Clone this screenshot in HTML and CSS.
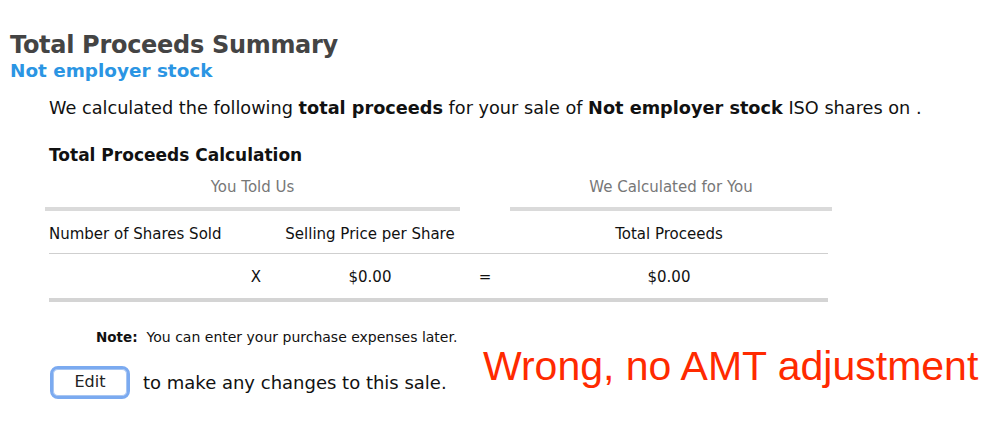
FILE: index.html
```html
<!DOCTYPE html>
<html>
<head>
<meta charset="utf-8">
<link rel="stylesheet" href="styles.css">
</head>
<body>
<div class="page">
  <h1 class="title">Total Proceeds Summary</h1>
  <div class="subtitle">Not employer stock</div>
  <p class="intro">We calculated the following <b>total proceeds</b> for your sale of <b>Not employer stock</b> ISO shares on .</p>
  <h2 class="section">Total Proceeds Calculation</h2>
  <div class="calc">
    <div class="groups">
      <div class="group"><span class="group-label">You Told Us</span></div>
      <div></div>
      <div class="group"><span class="group-label">We Calculated for You</span></div>
    </div>
    <div class="grid head">
      <div class="c1 left">Number of Shares Sold</div>
      <div class="c2">Selling Price per Share</div>
      <div class="c3"></div>
      <div class="c4">Total Proceeds</div>
    </div>
    <div class="grid data">
      <div class="c1 right">X</div>
      <div class="c2">$0.00</div>
      <div class="c3">=</div>
      <div class="c4">$0.00</div>
    </div>
  </div>
  <div class="note"><b>Note:</b><span>You can enter your purchase expenses later.</span></div>
  <div class="edit-row">
    <button class="edit-btn">Edit</button>
    <span>to make any changes to this sale.</span>
  </div>
  <div class="annotation">Wrong, no AMT adjustment</div>
</div>
</body>
</html>
```
FILE: styles.css
```css
html, body { margin: 0; padding: 0; background: #fff; }
body { font-family: "DejaVu Sans", "Lucida Grande", sans-serif; color: #111; }
.page { position: relative; width: 999px; height: 442px; padding: 30px 0 0 10px; box-sizing: border-box; overflow: hidden; }
.title { margin: 0; font-size: 24px; line-height: 30px; font-weight: bold; color: #444; letter-spacing: -0.3px; }
.subtitle { font-size: 18.4px; line-height: 22px; font-weight: bold; color: #2b95e3; margin-top: 0; }
.intro { margin: 14px 0 0 39px; font-size: 17.7px; line-height: 24px; color: #111; white-space: nowrap; }
.section { margin: 24px 0 0 39px; font-size: 17px; line-height: 22px; font-weight: bold; color: #111; }
.calc { margin: 3px 0 0 35px; width: 787px; }
.groups { display: grid; grid-template-columns: 415px 50px 322px; }
.group { border-bottom: 4px solid #dadada; text-align: center; padding: 8px 0 10px; }
.group-label { font-size: 15px; line-height: 20px; color: #777; }
.grid { display: grid; grid-template-columns: 231px 180px 50px 318px; margin-left: 4px; width: 779px; font-size: 15px; }
.grid > div { text-align: center; }
.grid .left { text-align: left; }
.grid .right { text-align: right; padding-right: 19px; }
.head { border-bottom: 1px solid #cfcfcf; padding: 13px 0 8px; line-height: 21px; }
.data { border-bottom: 4px solid #d4d4d4; padding: 13px 0 10px; line-height: 21px; }
.note { margin: 26px 0 0 86px; font-size: 14px; line-height: 18px; color: #111; }
.note b { font-size: 13.5px; }
.note span { margin-left: 9px; }
.edit-row { margin: 20px 0 0 40px; display: flex; align-items: center; gap: 13px; font-size: 18px; }
.edit-btn { width: 80px; height: 33px; box-sizing: border-box; border: 3px solid #7baaf0; border-radius: 8px; background: #fff; font-family: inherit; font-size: 16px; color: #222; padding: 0 0 2px; box-shadow: inset 0 0 0 1px #a8c6f2; }
.annotation { position: absolute; left: 483px; top: 346px; font-family: "Liberation Sans", Arial, sans-serif; font-size: 41px; line-height: 41px; color: #ff2a00; white-space: nowrap; }
```
